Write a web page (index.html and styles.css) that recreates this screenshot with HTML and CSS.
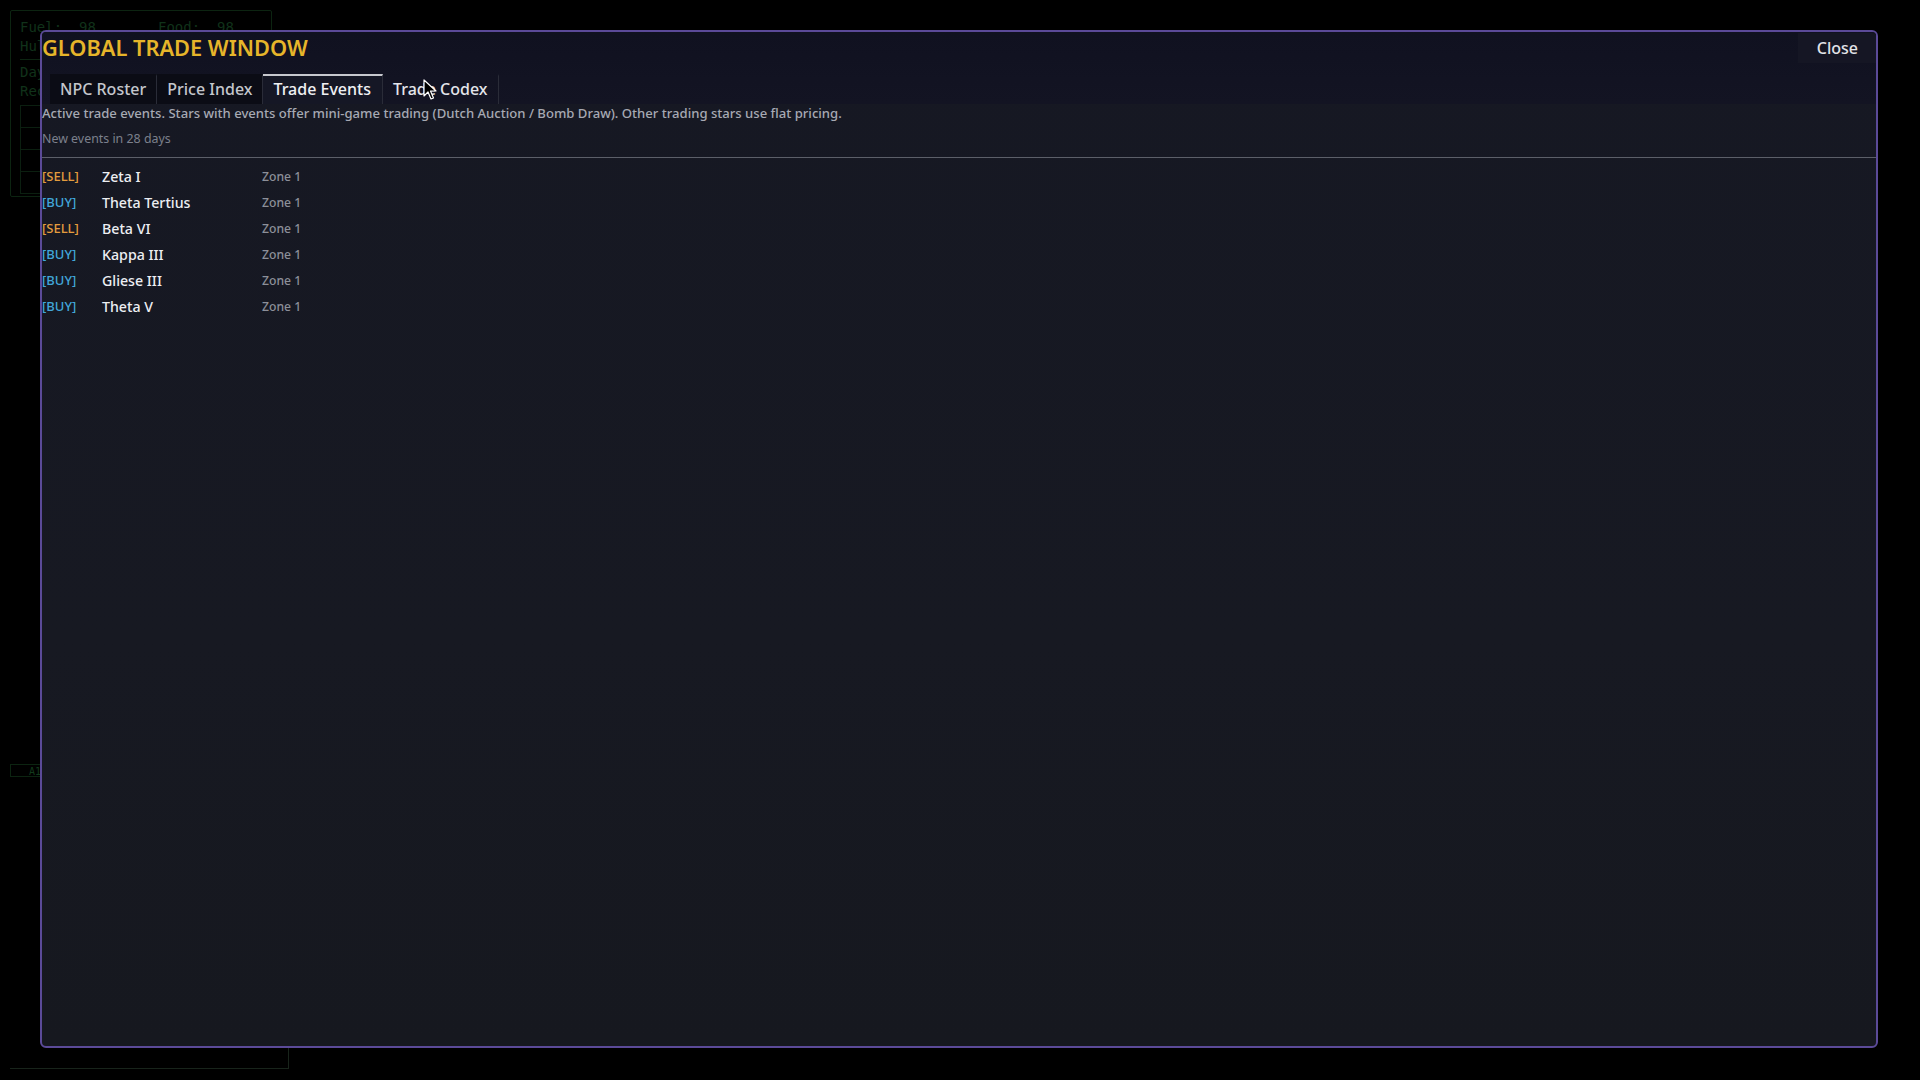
FILE: index.html
```html
<!DOCTYPE html>
<html lang="en">
<head>
    <meta charset="UTF-8">
    <meta name="viewport" content="width=device-width, initial-scale=1.0">
    <title>Global Trade Window</title>
    <link rel="stylesheet" href="styles.css">
</head>
<body>
    <!-- HUD behind the modal -->
    <div class="hud">
        <div class="hud-line"><span class="hud-col">Fuel:  98</span><span>Food:  98</span></div>
        <div class="hud-line"><span class="hud-col">Hull: 100</span><span>Crew:  12</span></div>
        <div class="hud-sep"></div>
        <div class="hud-line">Day: 1</div>
        <div class="hud-line">Rec: 0</div>
        <div class="hud-grid">
            <div class="hud-cell"></div>
            <div class="hud-cell"></div>
            <div class="hud-cell"></div>
            <div class="hud-cell"></div>
        </div>
    </div>
    <div class="hud-tag">A1</div>
    <div class="hud-footer"></div>

    <div class="trade-window">
        <div class="window-header">
            <div class="window-top">
                <h1 class="window-title">GLOBAL TRADE WINDOW</h1>
                <button class="close-button">Close</button>
            </div>
            <div class="tabs">
                <div class="tab">NPC Roster</div>
                <div class="tab">Price Index</div>
                <div class="tab active">Trade Events</div>
                <div class="tab hover">Trade Codex</div>
            </div>
        </div>

        <div class="events-info">
            <div class="events-desc">Active trade events. Stars with events offer mini-game trading (Dutch Auction / Bomb Draw). Other trading stars use flat pricing.</div>
            <div class="events-timer">New events in 28 days</div>
        </div>

        <div class="event-list">
            <div class="event-row">
                <span class="event-tag sell">[SELL]</span>
                <span class="event-star">Zeta I</span>
                <span class="event-zone">Zone 1</span>
            </div>
            <div class="event-row">
                <span class="event-tag buy">[BUY]</span>
                <span class="event-star">Theta Tertius</span>
                <span class="event-zone">Zone 1</span>
            </div>
            <div class="event-row">
                <span class="event-tag sell">[SELL]</span>
                <span class="event-star">Beta VI</span>
                <span class="event-zone">Zone 1</span>
            </div>
            <div class="event-row">
                <span class="event-tag buy">[BUY]</span>
                <span class="event-star">Kappa III</span>
                <span class="event-zone">Zone 1</span>
            </div>
            <div class="event-row">
                <span class="event-tag buy">[BUY]</span>
                <span class="event-star">Gliese III</span>
                <span class="event-zone">Zone 1</span>
            </div>
            <div class="event-row">
                <span class="event-tag buy">[BUY]</span>
                <span class="event-star">Theta V</span>
                <span class="event-zone">Zone 1</span>
            </div>
        </div>
    </div>

    <!-- mouse pointer hovering Trade Codex -->
    <svg class="cursor" width="14" height="22" viewBox="0 0 14 22">
        <path d="M1 1 L1 17 L5 13 L8 20 L10.5 19 L7.5 12 L13 12 Z" fill="#000" stroke="#fff" stroke-width="1.2" stroke-linejoin="round"/>
    </svg>
</body>
</html>
```

FILE: styles.css
```css
body {
    margin: 0;
    width: 1920px;
    height: 1080px;
    overflow: hidden;
    position: relative;
    background: #000;
    font-family: 'Noto Sans', 'Open Sans', sans-serif;
}

/* background HUD */
.hud {
    position: absolute;
    left: 10px;
    top: 10px;
    width: 262px;
    height: 187px;
    border: 1px solid #0c2411;
    border-radius: 2px;
    padding: 7px 9px;
    box-sizing: border-box;
    font-family: 'DejaVu Sans Mono', monospace;
    font-size: 14px;
    color: #10321a;
}

.hud-line {
    white-space: pre;
    line-height: 19px;
}

.hud-col {
    display: inline-block;
    width: 138px;
}

.hud-sep {
    border-top: 1px solid #0c2411;
    margin: 3px 0 3px;
}

.hud-grid {
    margin-top: 4px;
}

.hud-cell {
    height: 21px;
    border: 1px solid #0b1f10;
    border-bottom: none;
}

.hud-cell:last-child {
    border-bottom: 1px solid #0b1f10;
}

.hud-tag {
    position: absolute;
    left: 10px;
    top: 764px;
    width: 50px;
    height: 13px;
    border: 1px solid #0c2411;
    font-family: 'DejaVu Sans Mono', monospace;
    font-size: 10px;
    line-height: 13px;
    color: #123a1c;
    padding-left: 18px;
    box-sizing: border-box;
}

.hud-footer {
    position: absolute;
    left: 10px;
    top: 1000px;
    width: 279px;
    height: 69px;
    border-right: 1px solid #18241b;
    border-bottom: 1px solid #18241b;
    box-sizing: border-box;
}

/* modal */
.trade-window {
    position: absolute;
    left: 40px;
    top: 30px;
    width: 1838px;
    height: 1018px;
    box-sizing: border-box;
    border: 2px solid #5b4a98;
    border-radius: 6px;
    background: linear-gradient(180deg, #161823 0%, #171922 60%, #16181f 100%);
    display: flex;
    flex-direction: column;
}

.window-header {
    background: linear-gradient(180deg, #101120 0%, #131423 100%);
    border-radius: 4px 4px 0 0;
}

.window-top {
    display: flex;
    justify-content: space-between;
    align-items: flex-start;
}

.window-title {
    margin: 0;
    padding-top: 1px;
    font-size: 21.8px;
    font-weight: 600;
    line-height: 30px;
    color: #e6b52a;
}

.close-button {
    margin-top: 1px;
    height: 30px;
    padding: 0 18px 0 19px;
    border: none;
    border-radius: 0 4px 0 0;
    background: #151624;
    color: #e2e3e8;
    font-family: inherit;
    font-size: 16px;
    font-weight: 500;
}

.tabs {
    display: flex;
    margin: 11px 0 0 8px;
}

.tab {
    height: 30px;
    box-sizing: border-box;
    padding: 0 10px 2px 10px;
    border-top: 2px solid transparent;
    border-right: 1px solid #2a2c38;
    background: #0b0c15;
    color: #c4c6cc;
    font-size: 16px;
    font-weight: 500;
    display: flex;
    align-items: center;
}

.tab.active {
    padding-right: 11px;
    background: #151725;
    border-top-color: #c7c8ce;
    color: #eff0f3;
}

.tab.hover {
    padding-right: 11px;
    background: transparent;
    color: #e4e5ea;
}

.events-info {
    margin-top: 0;
}

.events-desc {
    font-size: 13.1px;
    font-weight: 500;
    line-height: 18px;
    color: #a6a9b3;
}

.events-timer {
    margin-top: 8px;
    font-size: 12.4px;
    line-height: 18px;
    color: #7c808c;
}

.event-list {
    margin-top: 9px;
    border-top: 1px solid #5c5f69;
    padding-top: 5px;
}

.event-row {
    display: flex;
    align-items: center;
    height: 26px;
}

.event-tag {
    width: 60px;
    font-size: 13px;
    font-weight: 500;
}

.event-tag.sell {
    color: #e39c3e;
}

.event-tag.buy {
    color: #41a6d9;
}

.event-star {
    width: 160px;
    font-size: 14.2px;
    font-weight: 500;
    color: #eceef2;
}

.event-zone {
    font-size: 12.2px;
    font-weight: 500;
    color: #8c8f99;
}

.cursor {
    position: absolute;
    left: 423px;
    top: 79px;
}
```
